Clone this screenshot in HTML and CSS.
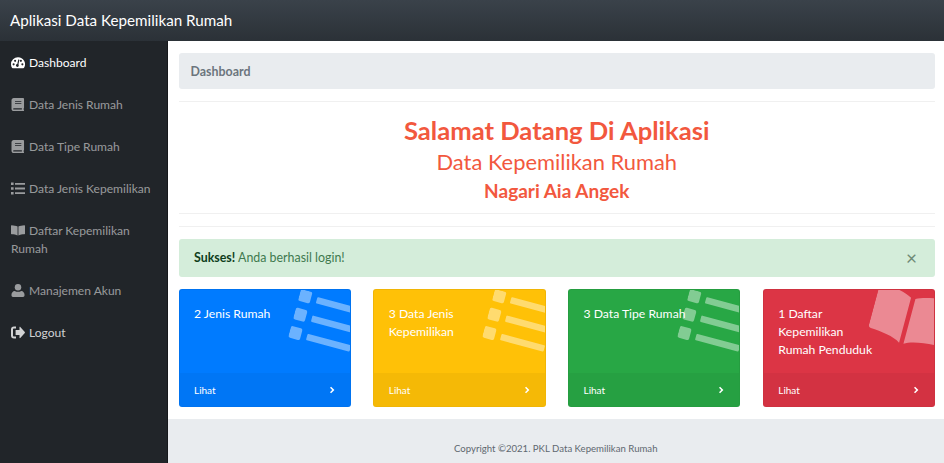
FILE: index.html
```html
<!DOCTYPE html>
<html lang="en">
<head>
    <meta charset="UTF-8">
    <meta name="viewport" content="width=device-width, initial-scale=1.0">
    <title>Aplikasi Data Kepemilikan Rumah</title>
    <link rel="stylesheet" href="styles.css">
</head>
<body>
    <svg class="sprite" aria-hidden="true">
        <symbol id="i-gauge" viewBox="0 0 16 14"><path fill-rule="evenodd" d="M8 1a8 8 0 0 0-8 8c0 1.500.4 2.900 1.100 4.100.2.300.5.500.9.500h12c.4 0 .7-.2.900-.5A8 8 0 0 0 8 1ZM3 10.300a1.200 1.200 0 1 1 0-2.400 1.200 1.200 0 0 1 0 2.400Zm1.700-4a1.200 1.200 0 1 1 0-2.400 1.200 1.200 0 0 1 0 2.400ZM8.700 11a1.600 1.600 0 1 1-1.500-2.200l1-4.700c.1-.4.400-.6.800-.5.400.1.600.4.500.8l-1 4.700c.4.500.5 1.300.2 1.900Zm2.600-4.700a1.200 1.200 0 1 1 0-2.400 1.200 1.200 0 0 1 0 2.400Zm1.700 4a1.200 1.200 0 1 1 0-2.400 1.200 1.200 0 0 1 0 2.400Z"/></symbol>
        <symbol id="i-book" viewBox="0 0 14 14"><path fill-rule="evenodd" d="M2.500 0h10c.6 0 1 .4 1 1v9.500c0 .3-.1.500-.3.600-.1.400-.1 1.400 0 1.800.2.100.3.300.3.600v.5H2.500C1.100 14 0 13 0 11.500v-9C0 1.100 1.100 0 2.500 0ZM3.800 3.400v.8h6.800v-.8Zm0 1.900v.8h6.800v-.8ZM2.500 11a.7.7 0 0 0 0 1.500h8.700a8 8 0 0 1 0-1.500Z"/></symbol>
        <symbol id="i-list" viewBox="0 0 14 12"><path d="M0 0h2.600v2.600H0zM0 4.700h2.600v2.600H0zM0 9.400h2.600V12H0zM4 .4h10v1.800H4zM4 5.100h10v1.800H4zM4 9.800h10v1.800H4z"/></symbol>
        <symbol id="i-open" viewBox="0 0 16 12"><path d="M7.500 1.500v10.300C6 10.800 3 10.400.6 10.300.3 10.300 0 10 0 9.700V.7C0 .3.300 0 .7 0c2.500.1 5.200.6 6.800 1.500ZM8.500 1.500v10.300c1.500-1 4.500-1.400 6.900-1.500.3 0 .6-.3.600-.6V.7c0-.4-.3-.7-.7-.7-2.500.1-5.200.6-6.800 1.500Z"/></symbol>
        <symbol id="i-user" viewBox="0 0 14 14"><circle cx="7" cy="3.600" r="3.500"/><path d="M3.500 7.500c1 .6 2.200.9 3.500.9s2.500-.3 3.500-.9c2 .2 3.500 1.800 3.500 3.800v1.200c0 .8-.7 1.500-1.500 1.500h-11C.7 14 0 13.300 0 12.500v-1.200c0-2 1.500-3.600 3.500-3.800Z"/></symbol>
        <symbol id="i-logout" viewBox="0 0 14 12"><path d="M5 2H3C2.400 2 2 2.400 2 3v6c0 .6.400 1 1 1h2v2H3a3 3 0 0 1-3-3V3a3 3 0 0 1 3-3h2ZM8.500.8c0-.4.500-.6.800-.3l4.500 5.100c.2.200.2.600 0 .8L9.300 11.500c-.3.300-.8.100-.8-.3V8.500H4.600V3.500h3.900Z"/></symbol>
        <symbol id="i-tile-list" viewBox="0 0 66 52"><rect width="12" height="12" rx="2"/><rect x="18" y="3.500" width="48" height="6.500" rx="1"/><rect y="19" width="12" height="12" rx="2"/><rect x="18" y="22.500" width="48" height="6.500" rx="1"/><rect y="38" width="12" height="12" rx="2"/><rect x="18" y="41.500" width="45" height="6.500" rx="1"/></symbol>
        <symbol id="i-chev" viewBox="0 0 6 8"><path d="M1.300 0 5.300 4l-4 4L0 6.700 2.700 4 0 1.300Z"/></symbol>
    </svg>

    <nav class="topbar">Aplikasi Data Kepemilikan Rumah</nav>

    <div class="wrapper">
        <ul class="sidebar">
            <li class="active"><a href="#"><svg class="nav-icon"><use href="#i-gauge"/></svg>Dashboard</a></li>
            <li><a href="#"><svg class="nav-icon"><use href="#i-book"/></svg>Data Jenis Rumah</a></li>
            <li><a href="#"><svg class="nav-icon"><use href="#i-book"/></svg>Data Tipe Rumah</a></li>
            <li><a href="#"><svg class="nav-icon"><use href="#i-list"/></svg>Data Jenis Kepemilikan</a></li>
            <li><a href="#"><svg class="nav-icon"><use href="#i-open"/></svg>Daftar Kepemilikan Rumah</a></li>
            <li><a href="#"><svg class="nav-icon"><use href="#i-user"/></svg>Manajemen Akun</a></li>
            <li class="logout"><a href="#"><svg class="nav-icon"><use href="#i-logout"/></svg>Logout</a></li>
        </ul>

        <div class="main">
            <div class="content">
                <div class="breadcrumb">Dashboard</div>
                <hr>
                <div class="welcome">
                    <h3>Salamat Datang Di Aplikasi</h3>
                    <h4>Data Kepemilikan Rumah</h4>
                    <h5>Nagari Aia Angek</h5>
                </div>
                <hr>
                <hr>

                <div class="alert">
                    <span><strong>Sukses!</strong> <span class="alert-msg">Anda berhasil login!</span></span>
                    <span class="close">&times;</span>
                </div>

                <div class="cards">
                    <div class="card blue">
                        <svg class="card-icon"><use href="#i-tile-list"/></svg>
                        <div class="card-body">2 Jenis Rumah</div>
                        <a class="card-foot" href="#"><span>Lihat</span><svg class="chev"><use href="#i-chev"/></svg></a>
                    </div>
                    <div class="card yellow">
                        <svg class="card-icon"><use href="#i-tile-list"/></svg>
                        <div class="card-body">3 Data Jenis Kepemilikan</div>
                        <a class="card-foot" href="#"><span>Lihat</span><svg class="chev"><use href="#i-chev"/></svg></a>
                    </div>
                    <div class="card green">
                        <svg class="card-icon"><use href="#i-tile-list"/></svg>
                        <div class="card-body">3 Data Tipe Rumah</div>
                        <a class="card-foot" href="#"><span>Lihat</span><svg class="chev"><use href="#i-chev"/></svg></a>
                    </div>
                    <div class="card red">
                        <svg class="card-icon book"><use href="#i-open"/></svg>
                        <div class="card-body">1 Daftar Kepemilikan Rumah Penduduk</div>
                        <a class="card-foot" href="#"><span>Lihat</span><svg class="chev"><use href="#i-chev"/></svg></a>
                    </div>
                </div>
            </div>

            <footer class="footer">Copyright &copy;2021. PKL Data Kepemilikan Rumah</footer>
        </div>
    </div>
</body>
</html>
```

FILE: styles.css
```css
* {
    box-sizing: border-box;
}
body {
    font-family: Lato, "Open Sans", sans-serif;
    font-size: 12.2px;
    line-height: 18px;
    margin: 0;
    height: 463px;
    overflow: hidden;
    background-color: #fff;
    color: #212529;
}
a {
    text-decoration: none;
    color: inherit;
}
.sprite {
    display: none;
}

.topbar {
    height: 41px;
    padding: 0 10px;
    font-size: 15.2px;
    line-height: 41px;
    color: #fff;
    background: linear-gradient(#3a424a, #2b3137);
}

.wrapper {
    display: flex;
    height: 422px;
}

.sidebar {
    width: 167.5px;
    flex-shrink: 0;
    margin: 0;
    padding: 1px 0 0;
    list-style: none;
    font-size: 12.05px;
    background-color: #212529;
    border-right: 1px solid #16181b;
}
.sidebar a {
    display: block;
    padding: 12px 10px 12px 11px;
    color: rgba(255, 255, 255, 0.55);
}
.sidebar .active a {
    color: #fff;
}
.sidebar .logout a {
    color: rgba(255, 255, 255, 0.8);
}
.nav-icon {
    width: 14px;
    height: 13px;
    margin-right: 4px;
    vertical-align: -2px;
    fill: currentColor;
}

.main {
    flex: 1;
    display: flex;
    flex-direction: column;
    min-width: 0;
}
.content {
    flex: 1;
    padding: 12px 9px 0 11px;
}

.breadcrumb {
    height: 36px;
    padding: 0 12px;
    line-height: 38px;
    font-size: 12.4px;
    font-weight: 700;
    color: #6c757d;
    background-color: #e9ecef;
    border-radius: 3px;
}
hr {
    margin: 12px 0;
    border: 0;
    border-top: 1px solid rgba(0, 0, 0, 0.06);
}

.welcome {
    text-align: center;
    color: #f2583e;
}
.welcome h3,
.welcome h4,
.welcome h5 {
    margin: 0;
}
.welcome h3 {
    font-size: 25.6px;
    line-height: 32px;
    font-weight: 700;
}
.welcome h4 {
    font-size: 21.9px;
    line-height: 32px;
    font-weight: 400;
}
.welcome h5 {
    font-size: 19px;
    line-height: 26px;
    font-weight: 700;
    margin-bottom: -3px;
}

.alert {
    display: flex;
    justify-content: space-between;
    align-items: center;
    height: 38px;
    padding: 0 16px 0 15.5px;
    font-size: 12.4px;
    color: #0f3d1b;
    background-color: #d4edda;
    border-radius: 3px;
}
.alert-msg {
    color: #3f7a4f;
}
.close {
    font-size: 19px;
    color: #6f8a76;
    margin-right: 2px;
}

.cards {
    display: grid;
    grid-template-columns: repeat(4, 1fr);
    gap: 22.5px;
    margin-top: 12px;
}
.card {
    position: relative;
    display: flex;
    flex-direction: column;
    height: 118px;
    overflow: hidden;
    color: #fff;
    border-radius: 3px;
    border: 1px solid rgba(0, 0, 0, 0.06);
}
.card.blue {
    background-color: #007bff;
}
.card.yellow {
    background-color: #ffc107;
}
.card.green {
    background-color: #28a745;
}
.card.red {
    background-color: #dc3545;
}
.card-body {
    flex: 1;
    padding: 15px 15px 0 14.5px;
    position: relative;
}
.yellow .card-body {
    padding-right: 60px;
}
.red .card-body {
    padding-right: 58px;
}
.card-icon {
    position: absolute;
    top: -1px;
    left: 121px;
    width: 66px;
    height: 52px;
    fill: rgba(255, 255, 255, 0.42);
    transform-origin: 0 0;
    transform: rotate(15deg);
    overflow: visible;
}
.card-icon.book {
    top: 1px;
    left: 108px;
    width: 72px;
    height: 54px;
    transform-origin: 50% 50%;
}
.card-foot {
    display: flex;
    justify-content: space-between;
    align-items: center;
    height: 33px;
    padding: 0 15px 0 14.5px;
    font-size: 10px;
    background-color: rgba(0, 0, 0, 0.04);
}
.chev {
    width: 5px;
    height: 8px;
    fill: #fff;
}

.footer {
    height: 44px;
    padding-top: 21px;
    text-align: center;
    font-size: 9.6px;
    color: #5f6870;
    background-color: #e9ecef;
}
```
